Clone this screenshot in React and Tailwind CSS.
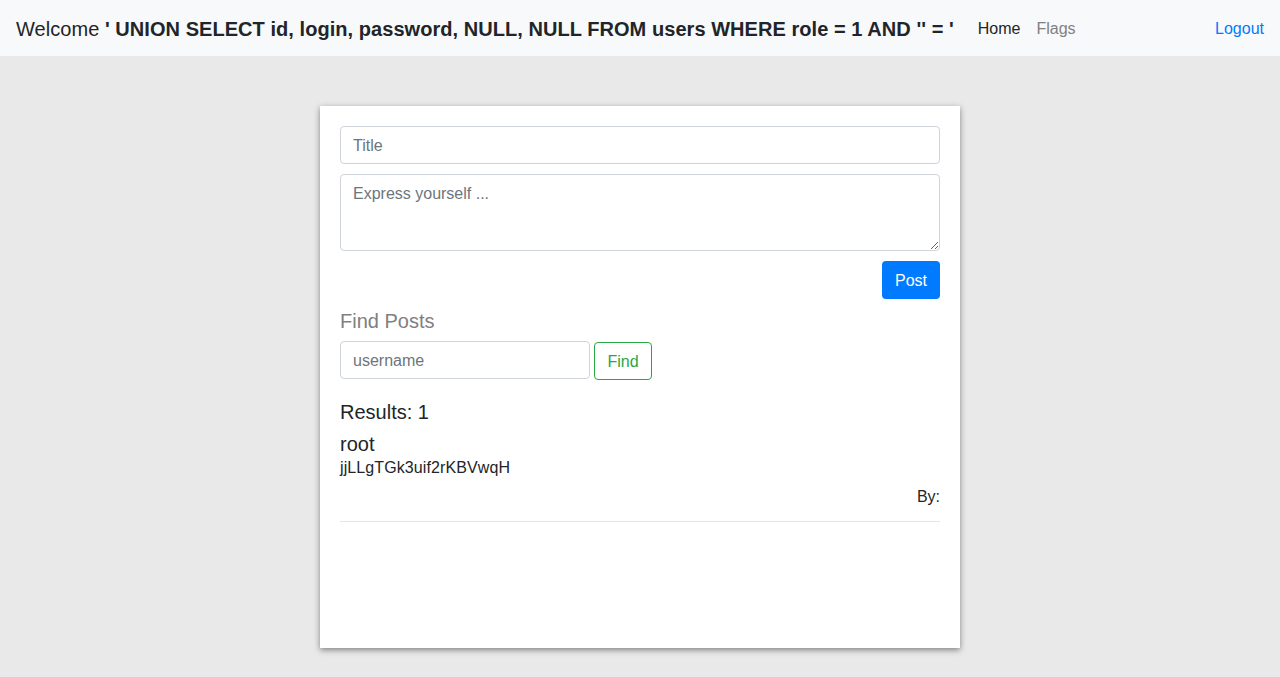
export default function App() {
  return (
    <div className="min-h-[677px] bg-[#e9e9e9] text-[#212529]" style={{ fontFamily: '"Liberation Sans", Arial, sans-serif' }}>
      <nav className="h-14 bg-[#f8f9fa] flex items-center px-4 pt-[2px]">
        <div className="text-[20px] leading-[30px] mr-4 whitespace-nowrap tracking-[0.05px]">
          Welcome <b>' UNION SELECT id, login, password, NULL, NULL FROM users WHERE role = 1 AND '' = '</b>
        </div>
        <div className="flex items-center text-base">
          <a className="px-2 text-[#212529] cursor-pointer">Home</a>
          <a className="px-2 text-[#808080] cursor-pointer">Flags</a>
        </div>
        <div className="ml-auto">
          <a className="text-[#007bff] text-base cursor-pointer">Logout</a>
        </div>
      </nav>
      <div className="flex justify-center pt-[50px]">
        <div className="w-[640px] h-[542px] bg-white p-5 shadow-[0_2px_6px_rgba(0,0,0,0.45)]">
          <input
            placeholder="Title"
            className="block w-full h-[38px] px-3 pt-[2px] border border-[#ced4da] rounded-[4px] text-base placeholder:text-[#6c757d] outline-none"
          />
          <textarea
            placeholder="Express yourself ..."
            className="block w-full h-[77px] mt-[10px] px-3 pt-[7px] pb-[5px] border border-[#ced4da] rounded-[4px] text-base placeholder:text-[#6c757d] outline-none"
          />
          <div className="flex justify-end mt-[10px]">
            <button className="h-[38px] px-[13px] pt-[2px] bg-[#007bff] text-white text-base rounded-[4px]">Post</button>
          </div>
          <h5 className="mt-[10px] mb-2 text-[20px] leading-6 text-[#808080]">Find Posts</h5>
          <div className="flex items-start gap-1">
            <input
              placeholder="username"
              className="w-[250px] h-[38px] px-3 pt-[2px] border border-[#ced4da] rounded-[4px] text-base placeholder:text-[#6c757d] outline-none"
            />
            <button className="mt-px h-[38px] px-3 pt-[2px] w-[58px] border border-[#28a745] text-[#28a745] text-base rounded-[4px]">Find</button>
          </div>
          <div className="mt-5 text-[20px] leading-6">Results: 1</div>
          <div className="mt-2 text-[20px] leading-6">root</div>
          <div className="text-base leading-6 tracking-[0.1px]">jjLLgTGk3uif2rKBVwqH</div>
          <div className="text-right text-base leading-6 mt-[5px]">By:</div>
          <hr className="mt-3 border-t border-[#e5e5e5]" />
        </div>
      </div>
    </div>
  );
}
